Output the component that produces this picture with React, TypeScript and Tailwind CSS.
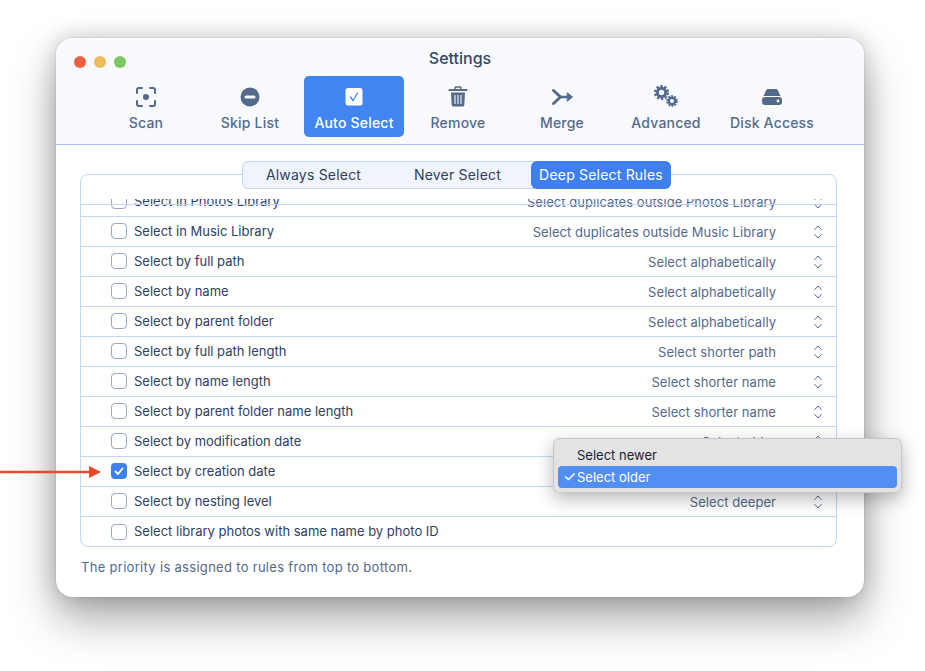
const tabs = ['Scan', 'Skip List', 'Auto Select', 'Remove', 'Merge', 'Advanced', 'Disk Access']

const rows = [
    { label: 'Select in Photos Library', value: 'Select duplicates outside Photos Library' },
    { label: 'Select in Music Library', value: 'Select duplicates outside Music Library' },
    { label: 'Select by full path', value: 'Select alphabetically' },
    { label: 'Select by name', value: 'Select alphabetically' },
    { label: 'Select by parent folder', value: 'Select alphabetically' },
    { label: 'Select by full path length', value: 'Select shorter path' },
    { label: 'Select by name length', value: 'Select shorter name' },
    { label: 'Select by parent folder name length', value: 'Select shorter name' },
    { label: 'Select by modification date', value: 'Select older' },
    { label: 'Select by creation date', value: 'Select older', checked: true },
    { label: 'Select by nesting level', value: 'Select deeper' },
    { label: 'Select library photos with same name by photo ID', value: '' },
]

function TabIcon({ name }: { name: string }) {
    const c = 'w-6 h-6 text-[#536a8b]'
    switch (name) {
        case 'Scan':
            return (
                <svg className={c} viewBox="0 0 24 24" fill="none" stroke="currentColor" strokeWidth="2" strokeLinecap="round">
                    <path d="M3 8V5a2 2 0 0 1 2-2h3M16 3h3a2 2 0 0 1 2 2v3M21 16v3a2 2 0 0 1-2 2h-3M8 21H5a2 2 0 0 1-2-2v-3" />
                    <circle cx="12" cy="12" r="3" fill="currentColor" stroke="none" />
                </svg>
            )
        case 'Skip List':
            return (
                <svg className={c} viewBox="0 0 24 24">
                    <circle cx="12" cy="12" r="9.5" fill="currentColor" />
                    <rect x="6.5" y="10.5" width="11" height="3" rx="1.5" fill="#f8fafd" />
                </svg>
            )
        case 'Auto Select':
            return (
                <svg className="w-6 h-6" viewBox="0 0 24 24">
                    <rect x="3.5" y="3" width="17" height="17.5" rx="2.5" fill="#fff" />
                    <path d="M8.5 12l2.5 3.5 4.5-7.5" fill="none" stroke="#4285f0" strokeWidth="1.3" strokeLinecap="round" strokeLinejoin="round" />
                </svg>
            )
        case 'Remove':
            return (
                <svg className={c} viewBox="0 0 24 24" fill="none" stroke="currentColor">
                    <path d="M9 4.500V2.800a.8.8 0 0 1 .8-.8h4.400a.8.8 0 0 1 .8.8v1.700" strokeWidth="1.500" />
                    <path d="M3.500 5h17" strokeWidth="2.200" strokeLinecap="round" />
                    <path d="M5 7.500h14l-.7 12.500a1.800 1.800 0 0 1-1.800 1.500h-9a1.800 1.800 0 0 1-1.800-1.500z" fill="currentColor" stroke="none" />
                    <path d="M9 10v9M12 10v9M15 10v9" stroke="#f8fafd" strokeWidth="1.100" />
                </svg>
            )
        case 'Merge':
            return (
                <svg className={c} viewBox="0 0 24 24" fill="none" stroke="currentColor" strokeLinecap="round" strokeLinejoin="round">
                    <path d="M3.500 5.500l7 6.500-7 6.500" strokeWidth="3" />
                    <path d="M10.500 12H18" strokeWidth="2.600" />
                    <path d="M17.500 8L22.500 12l-5 4z" fill="currentColor" strokeWidth="1" />
                </svg>
            )
        case 'Advanced':
            return (
                <svg className="w-[26px] h-6 text-[#536a8b]" viewBox="0 0 26 24" fill="none" stroke="currentColor">
                    <circle cx="8.500" cy="7.500" r="4.200" strokeWidth="3" />
                    <circle cx="8.500" cy="7.500" r="6.400" strokeWidth="2.200" strokeDasharray="2.400 1.620" />
                    <circle cx="19" cy="16" r="3.200" strokeWidth="2.400" />
                    <circle cx="19" cy="16" r="4.900" strokeWidth="1.900" strokeDasharray="1.900 1.180" />
                </svg>
            )
        default:
            return (
                <svg className={c} viewBox="0 0 24 24">
                    <path d="M6 5.500C6.500 4.500 7.500 4 8.500 4h7c1 0 2 .5 2.500 1.500L20.500 11h-17z" fill="currentColor" />
                    <rect x="2" y="12" width="20" height="8" rx="3" fill="currentColor" />
                    <circle cx="18" cy="16" r="1.400" fill="#f8fafd" />
                </svg>
            )
    }
}

function UpDown() {
    return (
        <svg className="block w-[8px] h-[14px] text-[#536a8b]" viewBox="0 0 8 14" fill="none" stroke="currentColor" strokeWidth="1" strokeLinecap="round" strokeLinejoin="round">
            <path d="M.8 4.500L4 1l3.200 3.500" />
            <path d="M.8 9.500L4 13l3.200-3.500" />
        </svg>
    )
}

export default function App() {
    return (
        <div className="relative w-[925px] h-[671px] overflow-hidden bg-white font-['Inter',sans-serif]">
            <div className="mx-[56px] mt-[38px] w-[808px] h-[559px] inline-block relative rounded-[16px] bg-white shadow-[0_0_1px_rgba(0,0,0,0.45),0_22px_45px_rgba(0,0,0,0.34),0_0_22px_rgba(0,0,0,0.18)]">
                <div className="h-[107px] bg-[#f8fafd] rounded-t-[16px] border-b border-[#a3c2f5]">
                    <div className="relative flex justify-center pt-[11px] h-[38px]">
                        <div className="absolute left-[18px] top-[18px] flex gap-[8px]">
                            <span className="w-3 h-3 rounded-full bg-[#e8603f]" />
                            <span className="w-3 h-3 rounded-full bg-[#eebc5a]" />
                            <span className="w-3 h-3 rounded-full bg-[#7ac85f]" />
                        </div>
                        <span className="text-[16px] leading-[18px] font-medium text-[#334766]">Settings</span>
                    </div>
                    <div className="flex gap-[4px] pl-[40px]">
                        {tabs.map(t => (
                            <div
                                key={t}
                                className={`w-[100px] h-[61px] rounded-[5px] flex flex-col items-center pt-[9px] ${t === 'Auto Select' ? 'bg-[#4285f0] text-white' : 'text-[#536a8b]'} ${t === 'Disk Access' ? 'ml-[2px]' : ''}`}
                            >
                                <TabIcon name={t} />
                                <span className="mt-[5px] text-[14px] leading-[18px] font-medium tracking-[0.2px]">{t}</span>
                            </div>
                        ))}
                    </div>
                </div>

                <div className="relative pl-[24px] pr-[27px] pt-[29px]">
                    <div className="absolute left-[186px] top-[16px] z-10 w-[429px] h-[28px] flex rounded-[6px] border border-[#c3d6f8] bg-[#f0f5fd] text-[14px] tracking-[0.2px] text-[#2f4160]">
                        <div className="w-[141px] text-center leading-[26px]">Always Select</div>
                        <div className="w-[147px] text-center leading-[26px]">Never Select</div>
                        <div className="-my-px -mr-px flex-1 text-center leading-[28px] rounded-[6px] bg-[#3f80ee] text-white">Deep Select Rules</div>
                    </div>

                    <div className="relative h-[373px] rounded-[8px] border border-[#c3d6f8] bg-white overflow-hidden">
                        <div className="h-[24px]" />
                        <div className="absolute left-0 right-0 top-[29px] h-px bg-[#c3d6f8]" />
                        <div className="h-[347px] overflow-hidden">
                            <div className="-mt-[12px]">
                                {rows.map((r, i) => (
                                    <div
                                        key={r.label}
                                        className={`h-[30px] flex items-center pl-[30px] pr-[14px] ${i < rows.length - 1 ? 'border-b border-[#c3d6f8]' : ''}`}
                                    >
                                        <span className={`mb-px w-4 h-4 rounded-[4px] flex items-center justify-center ${r.checked ? 'bg-[#3f80ee]' : 'border border-[#9aa8bd] bg-white'}`}>
                                            {r.checked && (
                                                <svg className="w-3 h-3" viewBox="0 0 12 12" fill="none" stroke="#fff" strokeWidth="1.800" strokeLinecap="round" strokeLinejoin="round">
                                                    <path d="M2.500 6.500L5 9l4.500-5.500" />
                                                </svg>
                                            )}
                                        </span>
                                        <span className="ml-[7px] text-[13px] text-[#2f4160]">{r.label}</span>
                                        {r.value && (
                                            <>
                                                <span className="mt-[2px] ml-auto text-[13px] tracking-[0.05px] text-[#536a8b]">{r.value}</span>
                                                <span className="ml-[38px]"><UpDown /></span>
                                            </>
                                        )}
                                    </div>
                                ))}
                            </div>
                        </div>
                    </div>
                    <p className="mt-[12px] ml-px text-[13px] leading-[16px] tracking-[0.3px] text-[#536a8b]">The priority is assigned to rules from top to bottom.</p>
                </div>
            </div>

            <div className="absolute left-[553px] top-[438px] w-[349px] h-[55px] rounded-[6px] border border-[#c4c8ce] bg-[#e3e3e3] shadow-[0_6px_18px_rgba(0,0,0,0.28)] px-[4px] pt-[5px] text-[13px]">
                <div className="h-[22px] pl-[19px] leading-[22px] text-[#1c2233]">Select newer</div>
                <div className="relative h-[22px] pl-[19px] leading-[22px] rounded-[4px] bg-[#528ff3] text-white">
                    <span className="absolute left-[5px] top-0 text-[15px]">✓</span>
                    Select older
                </div>
            </div>

            <svg className="absolute left-0 top-[462px]" width="102" height="20" viewBox="0 0 102 20">
                <path d="M0 10h90" stroke="#e8492f" strokeWidth="2.500" />
                <path d="M89 4l12 6-12 6z" fill="#e8492f" />
            </svg>
        </div>
    )
}
